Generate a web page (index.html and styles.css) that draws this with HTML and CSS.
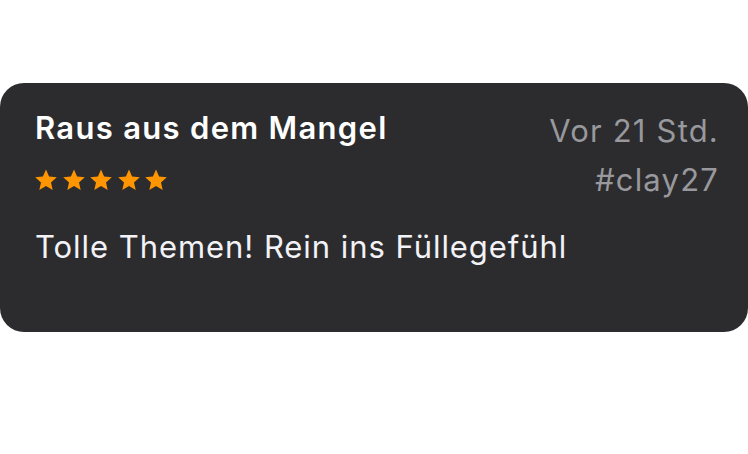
FILE: index.html
```html
<!DOCTYPE html>
<html lang="de">
<head>
    <meta charset="UTF-8">
    <meta name="viewport" content="width=device-width, initial-scale=1.0">
    <title>Bewertung</title>
    <link rel="stylesheet" href="styles.css">
</head>
<body>
    <div class="review-card">
        <div class="review-head">
            <div class="review-left">
                <div class="review-title">Raus aus dem Mangel</div>
                <div class="stars">
                    <svg class="star" viewBox="0 0 24 24"><path d="M12 1.5l3.1 7.1 7.7.7-5.8 5.1 1.7 7.6L12 18l-6.7 4 1.7-7.6-5.8-5.1 7.7-.7z"/></svg>
                    <svg class="star" viewBox="0 0 24 24"><path d="M12 1.5l3.1 7.1 7.7.7-5.8 5.1 1.7 7.6L12 18l-6.7 4 1.7-7.6-5.8-5.1 7.7-.7z"/></svg>
                    <svg class="star" viewBox="0 0 24 24"><path d="M12 1.5l3.1 7.1 7.7.7-5.8 5.1 1.7 7.6L12 18l-6.7 4 1.7-7.6-5.8-5.1 7.7-.7z"/></svg>
                    <svg class="star" viewBox="0 0 24 24"><path d="M12 1.5l3.1 7.1 7.7.7-5.8 5.1 1.7 7.6L12 18l-6.7 4 1.7-7.6-5.8-5.1 7.7-.7z"/></svg>
                    <svg class="star" viewBox="0 0 24 24"><path d="M12 1.5l3.1 7.1 7.7.7-5.8 5.1 1.7 7.6L12 18l-6.7 4 1.7-7.6-5.8-5.1 7.7-.7z"/></svg>
                </div>
            </div>
            <div class="review-meta">
                <div class="review-date">Vor 21 Std.</div>
                <div class="review-author">#clay27</div>
            </div>
        </div>
        <div class="review-body">Tolle Themen! Rein ins Füllegefühl</div>
    </div>
</body>
</html>
```

FILE: styles.css
```css
* {
    margin: 0;
    padding: 0;
    box-sizing: border-box;
}

body {
    background-color: #ffffff;
    font-family: Inter, Roboto, "Liberation Sans", sans-serif;
    -webkit-font-smoothing: antialiased;
}

.review-card {
    margin-top: 83px;
    height: 249px;
    background-color: #2c2c2e;
    border-radius: 24px;
    padding: 26px 29px 0 35px;
}

.review-head {
    display: flex;
    justify-content: space-between;
}

.review-title {
    color: #ffffff;
    font-size: 31px;
    font-weight: 600;
    letter-spacing: 1.3px;
    line-height: 38px;
}

.stars {
    display: flex;
    gap: 3.5px;
    margin: 21px 0 0 -1px;
}

.star {
    width: 24px;
    height: 24px;
    fill: #ff9500;
}

.review-meta {
    margin-top: -3px;
    text-align: right;
    color: #98989d;
    font-size: 31px;
    letter-spacing: 1.2px;
    line-height: 49px;
}

.review-body {
    margin-top: 24px;
    color: #f2f2f7;
    font-size: 31px;
    letter-spacing: 0.95px;
    line-height: 38px;
}
```
